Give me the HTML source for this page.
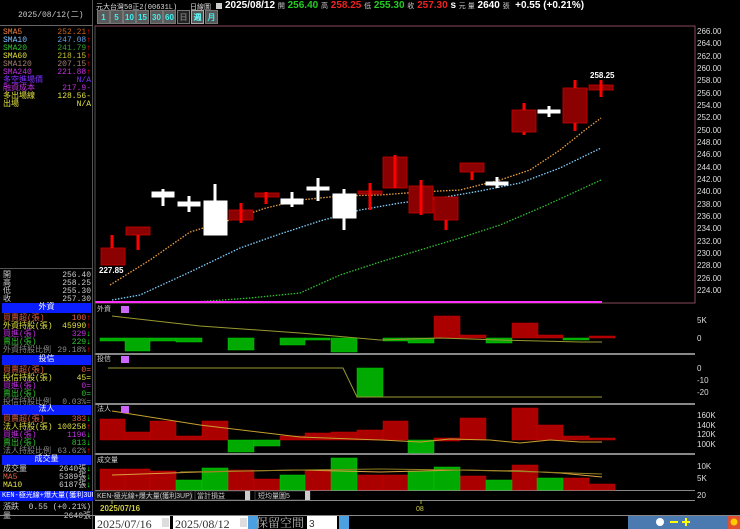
<!DOCTYPE html>
<html><head><meta charset="utf-8"><style>
*{margin:0;padding:0;box-sizing:border-box}
body{width:740px;height:529px;background:#000;overflow:hidden;position:relative;font-family:"Liberation Mono","Noto Sans CJK TC",monospace;font-size:8px;color:#ccc}
.a{position:absolute;white-space:nowrap}
.row{position:absolute;left:3px;width:88px;height:9px;font-size:8px;line-height:9px}
.row span{float:right}
.hd{position:absolute;left:2px;width:89px;height:10px;background:#0a1eff;color:#fff;text-align:center;font-size:8px;line-height:10px}
.tb{position:absolute;top:10px;height:14px;width:13px;background:#5a5a5a;color:#3cf0f0;font:bold 8px "Liberation Sans",sans-serif;text-align:center;line-height:13px;border:1px solid #777}
</style></head><body>
<div class="a" style="left:0;top:0;width:93px;height:529px;border-right:1px solid #555"></div>
<div class="a" style="left:0;top:25px;width:93px;height:1px;background:#666"></div>
<div class="a" style="left:18px;top:9px;color:#ccc;font-size:8px">2025/08/12(二)</div>
<div class="row" style="top:28px;color:#f08040">SMA5<span style="color:#c8651a">252.21<b style="color:#f00">↑</b></span></div>
<div class="row" style="top:36px;color:#80c0ff">SMA10<span style="color:#60a0e0">247.08<b style="color:#f00">↑</b></span></div>
<div class="row" style="top:44px;color:#30c030">SMA20<span style="color:#30a030">241.79<b style="color:#f00">↑</b></span></div>
<div class="row" style="top:52px;color:#e0e040">SMA60<span style="color:#c0c030">218.15<b style="color:#f00">↑</b></span></div>
<div class="row" style="top:60px;color:#a08070">SMA120<span style="color:#a08070">207.15<b style="color:#f00">↑</b></span></div>
<div class="row" style="top:68px;color:#c030e0">SMA240<span style="color:#c030e0">221.88<b style="color:#f00">↑</b></span></div>
<div class="row" style="top:76px;color:#8030ff">多空進場價<span>N/A</span></div>
<div class="row" style="top:84px;color:#c030e0">融資成本<span>217.9-</span></div>
<div class="row" style="top:92px;color:#e0e040">多出場線<span>128.56-</span></div>
<div class="row" style="top:100px;color:#e0e040">出場<span>N/A</span></div>
<div class="a" style="left:0;top:268px;width:93px;height:1px;background:#555"></div>
<div class="row" style="top:271px">開<span>256.40</span></div>
<div class="row" style="top:279px">高<span>258.25</span></div>
<div class="row" style="top:287px">低<span>255.30</span></div>
<div class="row" style="top:295px">收<span>257.30</span></div>
<div class="hd" style="top:303px">外資</div>
<div class="row" style="top:314px;color:#e06040">買賣超(張)<span>100<b style="color:#f00">↑</b></span></div>
<div class="row" style="top:322px;color:#e0e040">外資持股(張)<span>45990<b style="color:#f00">↑</b></span></div>
<div class="row" style="top:330px;color:#c030e0">買進(張)<span>329<b style="color:#0f0">↓</b></span></div>
<div class="row" style="top:338px;color:#30c030">賣出(張)<span>229<b style="color:#0f0">↓</b></span></div>
<div class="row" style="top:346px;color:#888">外資持股比例<span>29.18%<b style="color:#f00">↑</b></span></div>
<div class="hd" style="top:355px">投信</div>
<div class="row" style="top:366px;color:#e06040">買賣超(張)<span>0=</span></div>
<div class="row" style="top:374px;color:#e0e040">投信持股(張)<span>45=</span></div>
<div class="row" style="top:382px;color:#c030e0">買進(張)<span>0=</span></div>
<div class="row" style="top:390px;color:#30c030">賣出(張)<span>0=</span></div>
<div class="row" style="top:398px;color:#888">投信持股比例<span>0.03%=</span></div>
<div class="hd" style="top:405px">法人</div>
<div class="row" style="top:415px;color:#e06040">買賣超(張)<span>383<b style="color:#0f0">↓</b></span></div>
<div class="row" style="top:423px;color:#e0e040">法人持股(張)<span>100258<b style="color:#f00">↑</b></span></div>
<div class="row" style="top:431px;color:#c030e0">買進(張)<span>1196<b style="color:#0f0">↓</b></span></div>
<div class="row" style="top:439px;color:#30c030">賣出(張)<span>813<b style="color:#0f0">↓</b></span></div>
<div class="row" style="top:447px;color:#888">法人持股比例<span>63.62%<b style="color:#f00">↑</b></span></div>
<div class="hd" style="top:455px">成交量</div>
<div class="row" style="top:465px;color:#ccc">成交量<span>2640張<b style="color:#0f0">↓</b></span></div>
<div class="row" style="top:473px;color:#e06040">MA5<span style="color:#ccc">5389張<b style="color:#0f0">↓</b></span></div>
<div class="row" style="top:481px;color:#e0e040">MA10<span style="color:#ccc">6187張<b style="color:#0f0">↓</b></span></div>
<div class="a" style="left:0;top:491px;width:93px;height:10px;background:#0a1eff;color:#fff;font-size:7px;line-height:10px;padding-left:2px;overflow:hidden">KEN-極光線+爆大量(獲利3UP)</div>
<div class="row" style="top:503px">漲跌<span>0.55 (+0.21%)</span></div>
<div class="row" style="top:512px">量<span>2640張</span></div>

<div class="a" style="left:96px;top:2px;color:#ddd;font-size:7px">元大台灣50正2(00631L)</div>
<div class="a" style="left:190px;top:2px;color:#ddd;font-size:7px">日線圖</div>
<div class="a" style="left:216px;top:3px;width:6px;height:6px;background:#ccc"></div>
<div class="a" style="left:225px;top:0;font:bold 10px 'Liberation Sans',sans-serif;color:#fff">2025/08/12 <span style="font-weight:normal;font-size:7px;color:#ccc">開</span> <span style="color:#2c2">256.40</span> <span style="font-weight:normal;font-size:7px;color:#ccc">高</span> <span style="color:#e22">258.25</span> <span style="font-weight:normal;font-size:7px;color:#ccc">低</span> <span style="color:#2c2">255.30</span> <span style="font-weight:normal;font-size:7px;color:#ccc">收</span> <span style="color:#e22">257.30</span> s <span style="font-weight:normal;font-size:7px;color:#ccc">元 量</span> 2640 <span style="font-weight:normal;font-size:7px;color:#ccc">張</span>&nbsp; +0.55 (+0.21%)</div>
<div class="tb" style="left:97px">1</div><div class="tb" style="left:110px">5</div><div class="tb" style="left:123px">10</div><div class="tb" style="left:136px">15</div><div class="tb" style="left:150px">30</div><div class="tb" style="left:163px">60</div>
<div class="tb" style="left:177px;background:#222;color:#777">日</div><div class="tb" style="left:191px;background:#555;color:#6ff;border-color:#aaa">週</div><div class="tb" style="left:205px;background:#555">月</div>

<svg class="a" style="left:0;top:0" width="740" height="529" font-family="Liberation Sans,sans-serif">
<rect x="95" y="26" width="600" height="277" fill="none" stroke="#8a4a5a" stroke-width="1"/>
<g fill="#ddd" font-size="8">
<text x="697" y="34">266.00</text><text x="697" y="46">264.00</text><text x="697" y="59">262.00</text><text x="697" y="71">260.00</text><text x="697" y="83">258.00</text><text x="697" y="96">256.00</text><text x="697" y="108">254.00</text><text x="697" y="120">252.00</text><text x="697" y="133">250.00</text><text x="697" y="145">248.00</text><text x="697" y="157">246.00</text><text x="697" y="170">244.00</text><text x="697" y="182">242.00</text><text x="697" y="194">240.00</text><text x="697" y="207">238.00</text><text x="697" y="219">236.00</text><text x="697" y="231">234.00</text><text x="697" y="244">232.00</text><text x="697" y="256">230.00</text><text x="697" y="268">228.00</text><text x="697" y="281">226.00</text><text x="697" y="293">224.00</text>
<text x="697" y="323">5K</text><text x="697" y="341">0</text>
<text x="697" y="371">0</text><text x="697" y="383">-10</text><text x="697" y="395">-20</text>
<text x="697" y="418">160K</text><text x="697" y="428">140K</text><text x="697" y="437">120K</text><text x="697" y="447">100K</text>
<text x="697" y="469">10K</text><text x="697" y="481">5K</text><text x="697" y="498">20</text>
</g>
<polyline fill="none" stroke="#f0a040" stroke-width="1.3" stroke-dasharray="1.5,1.5" points="110,285 150,260 190,232 230,220 266,208 300,200 340,196 380,195 420,192 460,190 500,180 530,170 560,150 585,130 601,118"/>
<polyline fill="none" stroke="#80d0ff" stroke-width="1.3" stroke-dasharray="1.5,1.5" points="112,300 140,295 190,272 240,248 280,234 320,221 360,210 400,203 440,198 480,191 520,183 560,168 601,148"/>
<polyline fill="none" stroke="#30c030" stroke-width="1.3" stroke-dasharray="1.5,1.5" points="195,302 250,298 300,293 340,275 380,262 420,250 460,238 500,225 540,208 575,192 601,180"/>
<line x1="95" y1="302" x2="602" y2="302" stroke="#ff30ff" stroke-width="2"/>
<g fill="#8b0000" stroke="#c00" stroke-width="0.8">
<rect x="101" y="248" width="24" height="17"/><rect x="126" y="227" width="24" height="8"/>
<rect x="229" y="210" width="24" height="10"/><rect x="255" y="193" width="24" height="4"/>
<rect x="358" y="191" width="24" height="3"/><rect x="383" y="157" width="24" height="31"/>
<rect x="409" y="186" width="24" height="27"/><rect x="434" y="197" width="24" height="23"/>
<rect x="460" y="163" width="24" height="9"/><rect x="512" y="110" width="24" height="22"/>
<rect x="563" y="88" width="24" height="35"/><rect x="589" y="85" width="24" height="5"/>
</g>
<g stroke="#f00" stroke-width="3">
<line x1="112" y1="235" x2="112" y2="248"/><line x1="138" y1="235" x2="138" y2="250"/>
<line x1="241" y1="203" x2="241" y2="223"/><line x1="266" y1="192" x2="266" y2="204"/>
<line x1="370" y1="183" x2="370" y2="210"/><line x1="395" y1="155" x2="395" y2="188"/>
<line x1="421" y1="180" x2="421" y2="215"/><line x1="446" y1="220" x2="446" y2="230"/>
<line x1="472" y1="172" x2="472" y2="180"/><line x1="524" y1="103" x2="524" y2="110"/><line x1="524" y1="132" x2="524" y2="135"/>
<line x1="575" y1="80" x2="575" y2="88"/><line x1="575" y1="123" x2="575" y2="131"/><line x1="601" y1="80" x2="601" y2="97"/>
</g>
<g fill="#fff" stroke="#fff" stroke-width="3">
<rect x="152" y="192" width="22" height="5" stroke-width="1"/><line x1="163" y1="189" x2="163" y2="206"/>
<rect x="178" y="202" width="22" height="4" stroke-width="1"/><line x1="189" y1="196" x2="189" y2="212"/>
<rect x="204" y="201" width="23" height="34" stroke-width="1"/><line x1="215" y1="184" x2="215" y2="201"/>
<rect x="281" y="199" width="22" height="5" stroke-width="1"/><line x1="292" y1="192" x2="292" y2="207"/>
<rect x="307" y="187" width="22" height="3" stroke-width="1"/><line x1="318" y1="178" x2="318" y2="201"/>
<rect x="333" y="194" width="23" height="24" stroke-width="1"/><line x1="344" y1="189" x2="344" y2="230"/>
<rect x="486" y="182" width="22" height="3" stroke-width="1"/><line x1="497" y1="177" x2="497" y2="188"/>
<rect x="538" y="110" width="22" height="3" stroke-width="1"/><line x1="549" y1="106" x2="549" y2="117"/>
</g>
<text x="99" y="273" fill="#fff" font-size="8" font-weight="bold">227.85</text>
<text x="590" y="78" fill="#fff" font-size="8" font-weight="bold">258.25</text>
<g fill="#888"><rect x="95" y="353" width="600" height="2"/><rect x="95" y="403" width="600" height="2"/><rect x="95" y="453" width="600" height="2"/><rect x="95" y="490" width="600" height="1"/><rect x="95" y="500" width="600" height="1"/><rect x="0" y="515" width="740" height="1"/></g>
<line x1="95" y1="26" x2="95" y2="500" stroke="#555"/>
<g fill="#0a0" stroke="#0c0" stroke-width="0.5">
<rect x="100" y="338" width="25" height="3"/><rect x="125" y="338" width="25" height="13"/><rect x="150" y="338" width="26" height="3"/><rect x="176" y="338" width="26" height="4"/><rect x="228" y="338" width="26" height="12"/><rect x="280" y="338" width="25" height="7"/><rect x="305" y="338" width="25" height="2"/><rect x="331" y="338" width="26" height="14"/><rect x="383" y="338" width="25" height="3"/><rect x="408" y="338" width="26" height="5"/><rect x="486" y="338" width="26" height="5"/><rect x="563" y="338" width="26" height="2"/>
</g>
<g fill="#a00" stroke="#c00" stroke-width="0.5">
<rect x="434" y="316" width="26" height="22"/><rect x="460" y="335" width="26" height="3"/><rect x="512" y="323" width="26" height="15"/><rect x="537" y="335" width="26" height="3"/><rect x="589" y="336" width="26" height="2"/>
</g>
<polyline fill="none" stroke="#999a30" stroke-width="1" points="112,316 200,326 300,333 380,340 440,338 500,340 540,341 580,342 602,342"/>
<text x="97" y="311" fill="#ccc" font-size="7">外資</text><rect x="121" y="306" width="8" height="7" fill="#c6f"/>
<rect x="357" y="368" width="26" height="29" fill="#0a0" stroke="#0c0" stroke-width="0.5"/>
<polyline fill="none" stroke="#999a30" stroke-width="1" points="108,368 343,368 357,397 602,397"/>
<text x="97" y="361" fill="#ccc" font-size="7">投信</text><rect x="121" y="356" width="8" height="7" fill="#c6f"/>
<g fill="#a00" stroke="#c00" stroke-width="0.5">
<rect x="100" y="419" width="25" height="21"/><rect x="125" y="432" width="25" height="8"/><rect x="150" y="421" width="26" height="19"/><rect x="176" y="436" width="26" height="4"/><rect x="202" y="421" width="26" height="19"/><rect x="280" y="436" width="25" height="4"/><rect x="305" y="433" width="26" height="7"/><rect x="331" y="432" width="26" height="8"/><rect x="357" y="430" width="26" height="10"/><rect x="383" y="421" width="25" height="19"/><rect x="434" y="438" width="26" height="3"/><rect x="460" y="418" width="26" height="22"/><rect x="512" y="408" width="26" height="32"/><rect x="537" y="425" width="26" height="15"/><rect x="563" y="436" width="26" height="4"/><rect x="589" y="438" width="26" height="2"/>
</g>
<g fill="#0a0" stroke="#0c0" stroke-width="0.5"><rect x="228" y="440" width="26" height="12"/><rect x="254" y="440" width="26" height="6"/><rect x="408" y="440" width="26" height="13"/></g>
<polyline fill="none" stroke="#c8a030" stroke-width="1" points="112,411 200,425 300,437 380,440 420,442 450,439 490,440 520,443 550,440 580,442 602,442"/>
<text x="97" y="411" fill="#ccc" font-size="7">法人</text><rect x="121" y="406" width="8" height="7" fill="#c6f"/>
<g fill="#a00" stroke="#c00" stroke-width="0.5">
<rect x="100" y="469" width="25" height="21"/><rect x="125" y="469" width="25" height="21"/><rect x="150" y="471" width="26" height="19"/><rect x="228" y="470" width="26" height="20"/><rect x="254" y="479" width="26" height="11"/><rect x="305" y="470" width="26" height="20"/><rect x="357" y="475" width="26" height="15"/><rect x="383" y="475" width="25" height="15"/><rect x="460" y="476" width="26" height="14"/><rect x="512" y="465" width="26" height="25"/><rect x="563" y="478" width="26" height="12"/><rect x="589" y="484" width="26" height="6"/>
</g>
<g fill="#0a0" stroke="#0c0" stroke-width="0.5">
<rect x="176" y="480" width="26" height="10"/><rect x="202" y="468" width="26" height="22"/><rect x="280" y="475" width="25" height="15"/><rect x="331" y="458" width="26" height="32"/><rect x="408" y="471" width="26" height="19"/><rect x="434" y="467" width="26" height="23"/><rect x="486" y="480" width="26" height="10"/><rect x="537" y="478" width="26" height="12"/>
</g>
<polyline fill="none" stroke="#e0a040" stroke-width="1" points="112,475 200,472 300,470 380,472 420,471 460,470 520,471 560,473 602,477"/>
<polyline fill="none" stroke="#908020" stroke-width="1" points="180,472 300,470 380,469 460,470 540,472 602,474"/>
<text x="97" y="462" fill="#ccc" font-size="7">成交量</text>
<rect x="95" y="491" width="97" height="9" fill="#111" stroke="#555" stroke-width="0.5"/>
<text x="97" y="498" fill="#ccc" font-size="7">KEN-極光線+爆大量(獲利3UP)</text>
<rect x="195" y="491" width="55" height="9" fill="#000" stroke="#777" stroke-width="0.5"/><text x="197" y="498" fill="#ccc" font-size="7">當計損益</text><rect x="245" y="491" width="5" height="9" fill="#ccc"/>
<rect x="255" y="491" width="55" height="9" fill="#000" stroke="#777" stroke-width="0.5"/><text x="258" y="498" fill="#ccc" font-size="7">短均量圖5</text><rect x="305" y="491" width="5" height="9" fill="#ccc"/>
<line x1="112" y1="500" x2="112" y2="504" stroke="#aa4"/><text x="100" y="511" fill="#cc4" font-size="8" font-weight="bold">2025/07/16</text>
<line x1="421" y1="500" x2="421" y2="504" stroke="#aa4"/><text x="416" y="511" fill="#cc4" font-size="7">08</text>
<rect x="95" y="516" width="75" height="13" fill="#fff"/><text x="97" y="528" fill="#333" font-family="Liberation Serif,serif" font-size="12">2025/07/16</text><rect x="162" y="518" width="7" height="9" fill="#ddd"/>
<text x="173" y="526" fill="#ccc" font-size="9">~</text>
<rect x="173" y="516" width="75" height="13" fill="#fff"/><text x="175" y="528" fill="#333" font-family="Liberation Serif,serif" font-size="12">2025/08/12</text><rect x="240" y="518" width="7" height="9" fill="#ddd"/>
<rect x="248" y="516" width="10" height="13" fill="#4aa0e0"/>
<text x="256" y="527" fill="#bbb" font-family="Noto Serif CJK SC,serif" font-size="12">保留空間</text>
<rect x="307" y="516" width="30" height="13" fill="#fff"/><text x="309" y="527" fill="#333" font-size="10">3</text>
<rect x="339" y="516" width="10" height="13" fill="#4aa0e0"/>
<rect x="628" y="516" width="112" height="13" fill="#4a7ab0"/>
<circle cx="660" cy="522" r="4" fill="#fff"/><rect x="670" y="521" width="8" height="2" fill="#ff0"/><rect x="682" y="521" width="8" height="2" fill="#ff0"/><rect x="685" y="518" width="2" height="8" fill="#ff0"/>
<rect x="728" y="516" width="12" height="13" fill="#e05030"/><circle cx="734" cy="522" r="3.5" fill="#fc0"/>
</svg>
</body></html>
